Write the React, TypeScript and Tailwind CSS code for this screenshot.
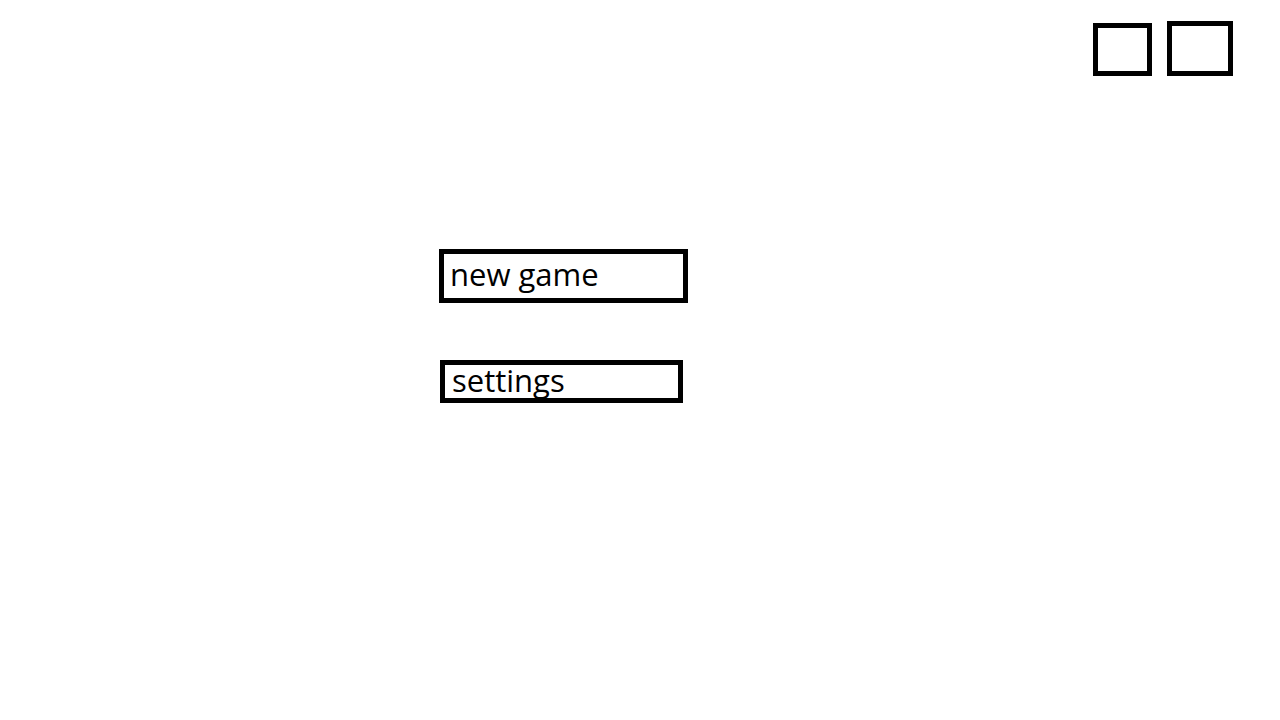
export default function App() {
  return (
    <div className="flex h-[720px] w-[1280px] flex-col bg-white font-['Open_Sans',sans-serif] text-black">
      {/* window controls, top right */}
      <div className="flex items-end justify-end gap-[15px] pr-[47px] pt-[21px]">
        <button type="button" className="h-[53px] w-[59px] border-[5px] border-black" />
        <button type="button" className="h-[55px] w-[66px] border-[5px] border-black" />
      </div>

      <div className="mt-[173px] flex flex-col items-start pl-[439px]">
        <button
          type="button"
          className="flex h-[54px] w-[249px] items-center border-[5px] border-black pb-[4px] pl-[6px] text-left text-[31px] leading-none"
        >
          new game
        </button>
        <button
          type="button"
          className="ml-px mt-[57px] flex h-[43px] w-[243px] items-center border-[5px] border-black pb-[2px] pl-[7px] text-left text-[31px] leading-none"
        >
          settings
        </button>
      </div>
    </div>
  );
}
